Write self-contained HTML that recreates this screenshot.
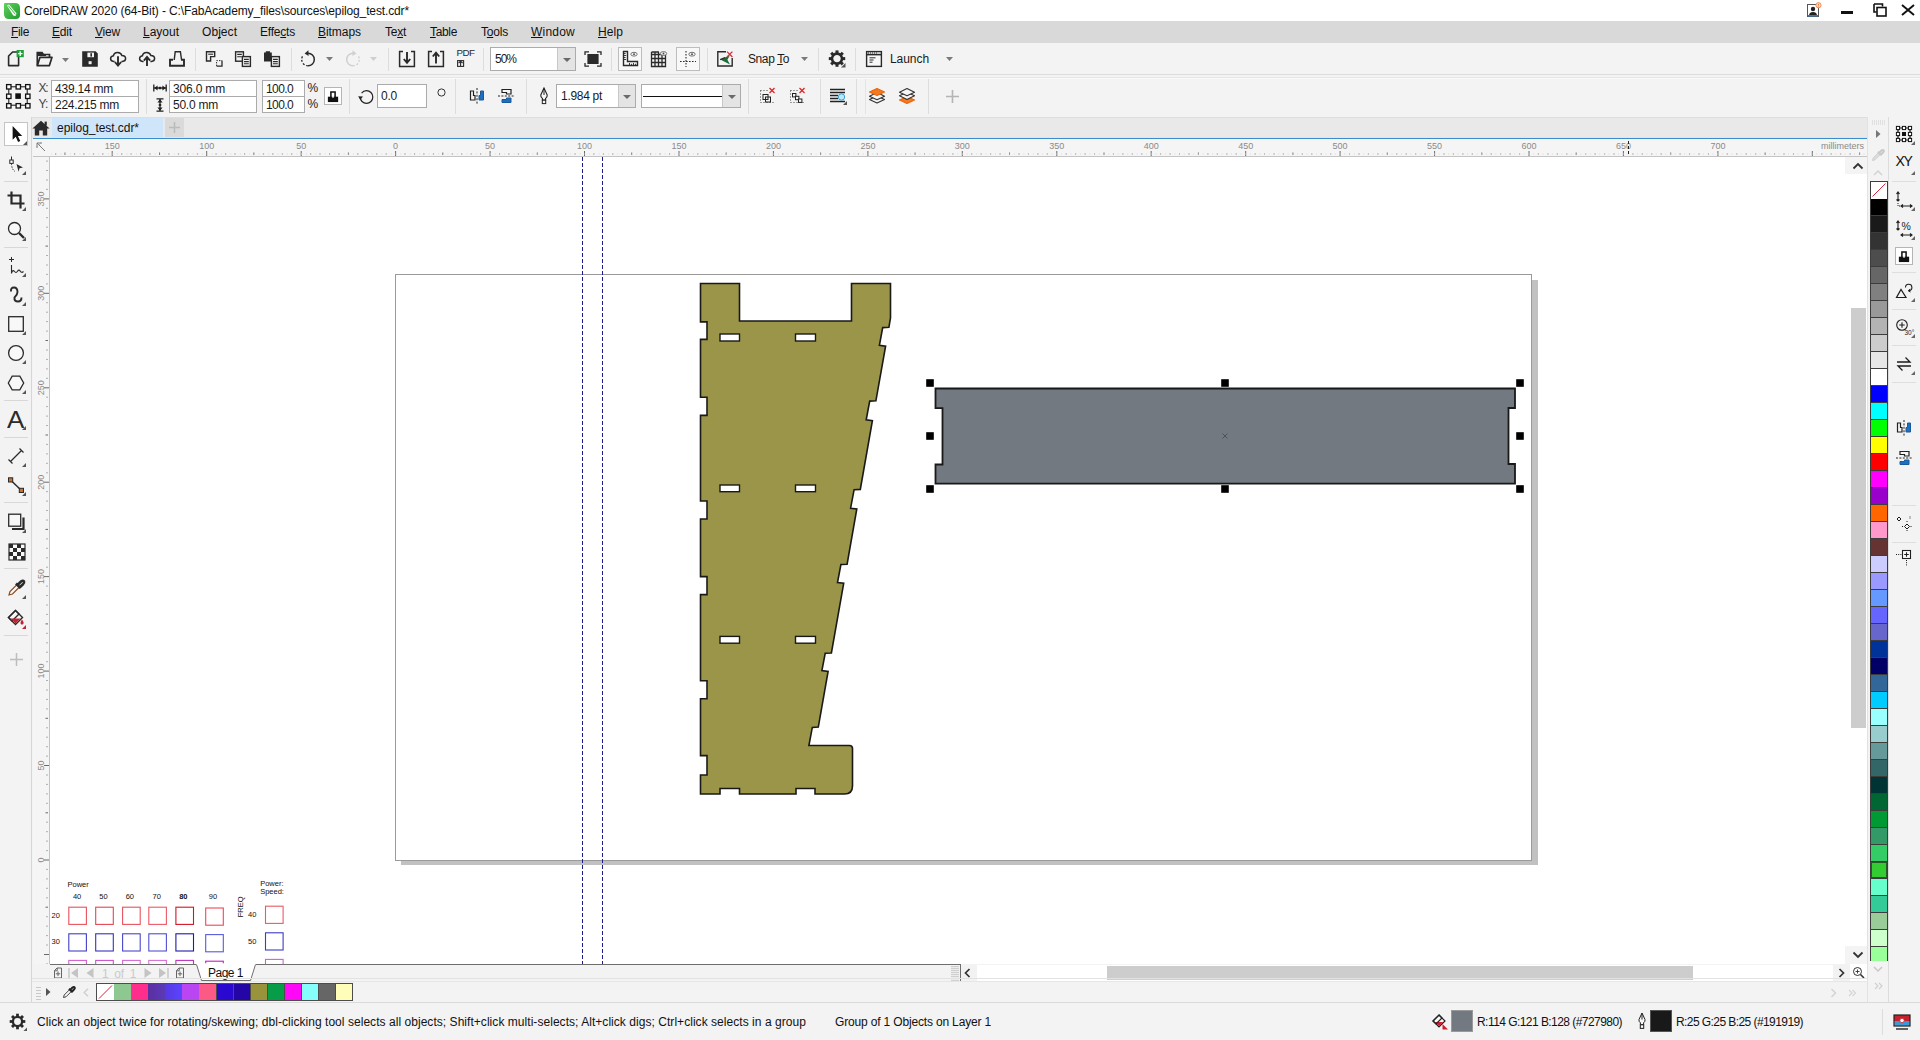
<!DOCTYPE html>
<html lang="en">
<head>
<meta charset="utf-8">
<title>CorelDRAW 2020 (64-Bit) - epilog_test.cdr</title>
<style>
*{box-sizing:border-box;margin:0;padding:0}
html,body{width:1920px;height:1040px;overflow:hidden;background:#f3f3f3}
body{font-family:"Liberation Sans",sans-serif;font-size:12px;color:#1a1a1a;position:relative}
.abs{position:absolute}
.t{position:absolute;white-space:pre;line-height:14px}
svg{position:absolute;overflow:visible}
.inp{position:absolute;background:#fff;border:1px solid #ababab}
.inp .t{left:4px;top:0px}
.vsep{position:absolute;width:1px;background:#d8d8d8}
.hsep{position:absolute;height:1px;background:#d8d8d8}
u{text-decoration-thickness:1px;text-underline-offset:1px;text-decoration-skip-ink:none}
</style>
</head>
<body>
<div class="abs" id="titlebar" style="left:0;top:0;width:1920px;height:21px;background:#fff">
<svg width="18" height="18" viewBox="0 0 18 18" style="left:3px;top:2px"><defs><linearGradient id="lg" x1="0" y1="0" x2="1" y2="1"><stop offset="0" stop-color="#5fd35a"/><stop offset="1" stop-color="#1f9a2e"/></linearGradient></defs><path d="M2 1 H12 Q17 1 17 6 V13 Q17 17 13 17 H6 Q1 17 1 12 V2 Q1 1 2 1Z" fill="url(#lg)"/><path d="M4 3.5 L6 2.6 L13.5 11.5 L12.6 14 L10.2 13.6 Z" fill="#fff"/><path d="M5.2 3.6 L12.4 12.4" stroke="#3fb548" stroke-width="1"/></svg>
<span class="t" style="left:24px;top:4px;color:#111;letter-spacing:-0.124px;">CorelDRAW 2020 (64-Bit) - C:\FabAcademy_files\sources\epilog_test.cdr*</span>
<svg width="16" height="16" viewBox="0 0 16 16" style="left:1806px;top:2px"><rect x="1.5" y="2.5" width="11" height="12" fill="#fff" stroke="#555" stroke-width="1"/><circle cx="7" cy="7" r="2.2" fill="#222"/><path d="M3 14 Q3 10 7 10 Q11 10 11 14 Z" fill="#222"/><rect x="2" y="13" width="10" height="1.5" fill="#3a78c2"/><circle cx="12.5" cy="3.2" r="2.6" fill="#fbd9c4" stroke="#f0905a" stroke-width="1"/><path d="M12.5 1.8 v1.8 M12.5 4.3 v.5" stroke="#e0601a" stroke-width=".8"/></svg>
<svg width="12" height="4" style="left:1841px;top:11px"><rect width="12" height="3" fill="#111"/></svg>
<svg width="14" height="14" viewBox="0 0 14 14" style="left:1873px;top:3px"><path d="M1 1 H9.5 V3.5 M1 1 V9 H3.5" fill="none" stroke="#111" stroke-width="1.6"/><rect x="4" y="4.5" width="9" height="8.5" fill="#fff" stroke="#111" stroke-width="1.6"/></svg>
<svg width="14" height="12" viewBox="0 0 14 12" style="left:1901px;top:4px"><path d="M1 1 L13 11 M13 1 L1 11" stroke="#111" stroke-width="1.9" fill="none"/></svg>
</div>
<div class="abs" id="menubar" style="left:0;top:21px;width:1920px;height:22px;background:#d9d9d9">
<span class="t" style="left:11px;top:4px;color:#111;letter-spacing:-0.334px;"><u>F</u>ile</span>
<span class="t" style="left:52px;top:4px;color:#111;letter-spacing:-0.170px;"><u>E</u>dit</span>
<span class="t" style="left:95px;top:4px;color:#111;letter-spacing:-0.198px;"><u>V</u>iew</span>
<span class="t" style="left:143px;top:4px;color:#111;letter-spacing:-0.005px;"><u>L</u>ayout</span>
<span class="t" style="left:202px;top:4px;color:#111;letter-spacing:0.053px;">Ob<u>j</u>ect</span>
<span class="t" style="left:260px;top:4px;color:#111;letter-spacing:-0.209px;">Effe<u>c</u>ts</span>
<span class="t" style="left:318px;top:4px;color:#111;letter-spacing:-0.050px;"><u>B</u>itmaps</span>
<span class="t" style="left:385px;top:4px;color:#111;letter-spacing:-0.252px;">Te<u>x</u>t</span>
<span class="t" style="left:430px;top:4px;color:#111;letter-spacing:-0.337px;"><u>T</u>able</span>
<span class="t" style="left:481px;top:4px;color:#111;letter-spacing:-0.202px;">T<u>o</u>ols</span>
<span class="t" style="left:531px;top:4px;color:#111;letter-spacing:0.220px;"><u>W</u>indow</span>
<span class="t" style="left:598px;top:4px;color:#111;letter-spacing:0.080px;"><u>H</u>elp</span>
</div>
<div class="abs" id="toolbar" style="left:0;top:43px;width:1920px;height:33px;background:#f3f3f3"><div class="abs" style="left:0;top:31px;width:1920px;height:1px;background:#dcdcdc"></div>
<svg width="18" height="18" viewBox="0 0 18 18" style="left:6.0px;top:7.0px"><path d="M2.6 6 L6.6 2 H12.6 V15.6 H2.6 Z" fill="none" stroke="#2a2a2a" stroke-width="1.6" stroke-linejoin="round"/><rect x="10.6" y="0" width="7.2" height="7.2" fill="#1f9e3a"/><path d="M14.2 1.3 V5.9 M11.9 3.6 H16.5" stroke="#fff" stroke-width="1.3"/></svg>
<svg width="18" height="18" viewBox="0 0 18 18" style="left:35.0px;top:7.0px"><path d="M2.3 15.5 V2.5 H7 L8.5 4.5 H14.5 V7" fill="none" stroke="#2a2a2a" stroke-width="1.7"/><path d="M2.3 15.7 L5 7.3 H17 L14.3 15.7 Z" fill="#f3f3f3" stroke="#2a2a2a" stroke-width="1.7" stroke-linejoin="round"/><path d="M2.3 2.5 H7 L8.5 4.5 H11 V6 H2.3Z" fill="#2a2a2a"/></svg>
<svg width="7" height="4" style="left:61.5px;top:14.5px"><path d="M0 0 H7 L3.5 4 Z" fill="#7a7a7a"/></svg>
<svg width="18" height="18" viewBox="0 0 18 18" style="left:81.0px;top:7.0px"><path d="M1.2 1.2 H14.6 L16.8 3.4 V16.8 H1.2 Z" fill="#2a2a2a"/><rect x="6.4" y="2.6" width="6.6" height="4.6" fill="#f3f3f3"/><rect x="9.4" y="3.2" width="1.6" height="3.4" fill="#2a2a2a"/><rect x="7.6" y="11.2" width="3" height="3" fill="#f3f3f3"/></svg>
<svg width="18" height="18" viewBox="0 0 18 18" style="left:109.0px;top:7.0px"><path d="M5.6 11.4 H4.6 Q1.6 11.4 1.6 8.6 Q1.6 6.2 4.4 5.8 Q5 2.4 8.6 2.4 Q12 2.4 12.9 5.5 Q16.6 5.6 16.6 8.6 Q16.6 11.4 13.4 11.4 H12.4" fill="none" stroke="#2a2a2a" stroke-width="1.5"/><path d="M9 6.2 V15 M5.9 12 L9 15.6 L12.1 12" fill="none" stroke="#2a2a2a" stroke-width="1.9"/></svg>
<svg width="18" height="18" viewBox="0 0 18 18" style="left:138.0px;top:7.0px"><path d="M5.6 11.4 H4.6 Q1.6 11.4 1.6 8.6 Q1.6 6.2 4.4 5.8 Q5 2.4 8.6 2.4 Q12 2.4 12.9 5.5 Q16.6 5.6 16.6 8.6 Q16.6 11.4 13.4 11.4 H12.4" fill="none" stroke="#2a2a2a" stroke-width="1.5"/><path d="M9 16 V7.4 M5.9 10.6 L9 7 L12.1 10.6" fill="none" stroke="#2a2a2a" stroke-width="1.9"/></svg>
<svg width="18" height="18" viewBox="0 0 18 18" style="left:168.0px;top:7.0px"><path d="M6.2 10 L7.2 1.8 H12.4 L13.6 10" fill="none" stroke="#2a2a2a" stroke-width="1.4"/><path d="M5 9.8 H2 V15.8 H16 V9.8 H13" fill="none" stroke="#2a2a2a" stroke-width="1.9"/></svg>
<div class="vsep" style="left:195px;top:5px;height:23px;background:#dddddd"></div>
<svg width="18" height="18" viewBox="0 0 18 18" style="left:204.0px;top:7.0px"><path d="M2.5 1.8 H10.7 V6.6 H6.6 V11 H2.5 Z" fill="none" stroke="#2a2a2a" stroke-width="1.4"/><path d="M4.2 4.2 H9.2" stroke="#2a2a2a" stroke-width="1.1"/><path d="M12.6 16 V10.6 H18" fill="none" stroke="#2a2a2a" stroke-width="1" stroke-dasharray="1.4 1.2"/><path d="M12.6 16.2 H18 V10.6" fill="none" stroke="#2a2a2a" stroke-width="1.3"/></svg>
<svg width="18" height="18" viewBox="0 0 18 18" style="left:233.0px;top:7.0px"><rect x="2.6" y="1.8" width="7.8" height="9.4" fill="#f3f3f3" stroke="#2a2a2a" stroke-width="1.4"/><path d="M4.2 4.4 H8.8 M4.2 6.8 H8.8" stroke="#2a2a2a" stroke-width="1.1"/><rect x="9.4" y="6.6" width="8" height="9.8" fill="#f3f3f3" stroke="#2a2a2a" stroke-width="1.4"/><path d="M11 9.4 H15.8 M11 11.6 H15.8 M11 13.8 H15.8" stroke="#2a2a2a" stroke-width="1.1"/></svg>
<svg width="18" height="18" viewBox="0 0 18 18" style="left:262.0px;top:7.0px"><path d="M2 2.6 H3.8 V1.2 H8 V2.6 H9.8 V11.4 H2 Z" fill="#2a2a2a"/><rect x="9.4" y="6.6" width="8" height="9.8" fill="#f3f3f3" stroke="#2a2a2a" stroke-width="1.4"/><path d="M11 9.4 H15.8 M11 11.6 H15.8 M11 13.8 H15.8" stroke="#2a2a2a" stroke-width="1.1"/></svg>
<div class="vsep" style="left:291px;top:5px;height:23px;background:#dddddd"></div>
<svg width="18" height="18" viewBox="0 0 18 18" style="left:299.0px;top:7.0px"><path d="M9 3.2 A6.3 6.3 0 1 1 3.2 7" fill="none" stroke="none" stroke-width="1.3" stroke-dasharray="7 0"/><path d="M9 3.2 A6.3 6.3 0 0 1 15.3 9.5 A6.3 6.3 0 0 1 9 15.8" fill="none" stroke="#2a2a2a" stroke-width="1.5"/><path d="M9 15.8 A6.3 6.3 0 0 1 2.7 9.5 A6.3 6.3 0 0 1 4 5.6" fill="none" stroke="#2a2a2a" stroke-width="1.3" stroke-dasharray="2 1.6"/><path d="M9.4 0.3 L5.6 3.4 L9.6 6 Z" fill="#2a2a2a"/></svg>
<svg width="7" height="4" style="left:325.5px;top:14.0px"><path d="M0 0 H7 L3.5 4 Z" fill="#7a7a7a"/></svg>
<svg width="18" height="18" viewBox="0 0 18 18" style="left:344.0px;top:7.0px"><path d="M9 3.2 A6.3 6.3 0 0 0 2.7 9.5 A6.3 6.3 0 0 0 9 15.8" fill="none" stroke="#cfcfcf" stroke-width="1.5"/><path d="M9 15.8 A6.3 6.3 0 0 0 15.3 9.5 A6.3 6.3 0 0 0 14 5.6" fill="none" stroke="#cfcfcf" stroke-width="1.3" stroke-dasharray="2 1.6"/><path d="M8.6 0.3 L12.4 3.4 L8.4 6 Z" fill="#cfcfcf"/></svg>
<svg width="7" height="4" style="left:369.5px;top:14.0px"><path d="M0 0 H7 L3.5 4 Z" fill="#cfcfcf"/></svg>
<div class="vsep" style="left:388px;top:5px;height:23px;background:#dddddd"></div>
<svg width="18" height="18" viewBox="0 0 18 18" style="left:398.0px;top:7.0px"><path d="M5 1.6 H1.6 V16.4 H16.4 V1.6 H13" fill="none" stroke="#2a2a2a" stroke-width="1.5"/><path d="M9 2 V12.5 M5.8 9 L9 12.8 L12.2 9" fill="none" stroke="#2a2a2a" stroke-width="1.9"/></svg>
<svg width="18" height="18" viewBox="0 0 18 18" style="left:427.0px;top:7.0px"><path d="M5 1.6 H1.6 V16.4 H16.4 V1.6 H13" fill="none" stroke="#2a2a2a" stroke-width="1.5"/><path d="M9 13.5 V3 M5.8 6.5 L9 2.7 L12.2 6.5" fill="none" stroke="#2a2a2a" stroke-width="1.9"/></svg>
<span class="t" style="left:456.5px;top:5px;font-size:9.8px;line-height:10px;color:#2a2a2a;letter-spacing:-0.5px">PDF</span>
<svg width="8" height="8" viewBox="0 0 8 8" style="left:457px;top:16px"><rect x=".6" y="1.6" width="6" height="5.8" fill="none" stroke="#2a2a2a" stroke-width="1.1"/><path d="M3.6 7 V2.2 M1.6 4.2 L3.6 2 L5.6 4.2" fill="none" stroke="#2a2a2a" stroke-width="1.1"/></svg>
<div class="vsep" style="left:483px;top:5px;height:23px;background:#dddddd"></div>
<div class="inp" style="left:490px;top:4px;width:86px;height:24px"><span class="t" style="left:4px;top:4px;letter-spacing:-1.006px;">50%</span><div class="abs" style="right:0;top:0;width:18px;height:22px;background:#e4e4e4;border-left:1px solid #c8c8c8"></div><svg width="8" height="4" style="left:72.0px;top:9.5px"><path d="M0 0 H8 L4.0 4 Z" fill="#6a6a6a"/></svg></div>
<svg width="18" height="18" viewBox="0 0 18 18" style="left:584.0px;top:7.0px"><rect x="3.4" y="4" width="11.2" height="10" fill="#2a2a2a"/><path d="M1 5 V1.8 H5 M13 1.8 H17 V5 M17 13 V16.2 H13 M5 16.2 H1 V13" fill="none" stroke="#2a2a2a" stroke-width="1.3"/></svg>
<div class="vsep" style="left:611px;top:5px;height:23px;background:#dddddd"></div>
<div class="abs" style="left:618px;top:4px;width:24px;height:24px;background:#f8f8f8;border:1px solid #bdbdbd"></div>
<svg width="18" height="18" viewBox="0 0 18 18" style="left:621.0px;top:7.0px"><path d="M2.5 1.5 V15.5 H16.5 V11.5 H6.5 V1.5 Z" fill="#f6f6f6" stroke="#2a2a2a" stroke-width="1.4"/><path d="M8.5 13 v2 M10.5 13.8 v1.5 M12.5 13 v2 M14.5 13.8 v1.5 M3 3.5 h1.6 M3 5.5 h2.2 M3 7.5 h1.6 M3 9.5 h2.2" stroke="#2a2a2a" stroke-width=".9"/><ellipse cx="13" cy="4.2" rx="3.2" ry="1.9" fill="#f6f6f6" stroke="#666" stroke-width=".9"/><circle cx="13" cy="4.2" r=".9" fill="#444"/></svg>
<svg width="18" height="18" viewBox="0 0 18 18" style="left:650.0px;top:7.0px"><path d="M1.5 4.5 V16.5 H15.5 V4.5 Z M1.5 8.5 H15.5 M1.5 12.5 H15.5 M5 2 V16.5 M8.5 2 V16.5 M12 4.5 V16.5 M1.5 2 V4.5 M1.5 2 H9" fill="none" stroke="#2a2a2a" stroke-width="1.3"/><ellipse cx="13.5" cy="3.5" rx="3.2" ry="1.9" fill="#f6f6f6" stroke="#666" stroke-width=".9"/><circle cx="13.5" cy="3.5" r=".9" fill="#444"/></svg>
<div class="abs" style="left:676px;top:4px;width:24px;height:24px;background:#f8f8f8;border:1px solid #bdbdbd"></div>
<svg width="18" height="18" viewBox="0 0 18 18" style="left:679.0px;top:7.0px"><path d="M7 1 V17" stroke="#2a2a2a" stroke-width="1.1" stroke-dasharray="1.6 1.4"/><path d="M1 11.5 H17" stroke="#2a2a2a" stroke-width="1.1" stroke-dasharray="1.6 1.4"/><ellipse cx="13" cy="4.2" rx="3.2" ry="1.9" fill="#f6f6f6" stroke="#666" stroke-width=".9"/><circle cx="13" cy="4.2" r=".9" fill="#444"/></svg>
<div class="vsep" style="left:707px;top:5px;height:23px;background:#dddddd"></div>
<svg width="18" height="18" viewBox="0 0 18 18" style="left:716.0px;top:7.0px"><path d="M10 1.8 H1.8 V16 H16.2 V8" fill="none" stroke="#2a2a2a" stroke-width="1.4"/><path d="M4.2 9.6 L13.8 5.4 L11.4 9.8 L14 14.6 Z" fill="#1a6e38"/><path d="M4.2 9.6 L9 7.5" stroke="#2a2a2a" stroke-width="1.2"/><path d="M11 1.6 L16.4 7 M16.4 1.6 L11 7" stroke="#e0283a" stroke-width="1.3"/></svg>
<span class="t" style="left:748px;top:9px;letter-spacing:-0.402px;">Snap <u>T</u>o</span>
<svg width="7" height="4" style="left:800.5px;top:14.0px"><path d="M0 0 H7 L3.5 4 Z" fill="#7a7a7a"/></svg>
<div class="vsep" style="left:818px;top:5px;height:23px;background:#dddddd"></div>
<svg width="18" height="18" viewBox="0 0 18 18" style="left:828.0px;top:7.0px"><g transform="translate(9 8.6)"><circle r="5" fill="none" stroke="#2a2a2a" stroke-width="2.6"/><rect x="-1.5" y="-8.2" width="3" height="3.4" fill="#2a2a2a" transform="rotate(0)"/><rect x="-1.5" y="-8.2" width="3" height="3.4" fill="#2a2a2a" transform="rotate(45)"/><rect x="-1.5" y="-8.2" width="3" height="3.4" fill="#2a2a2a" transform="rotate(90)"/><rect x="-1.5" y="-8.2" width="3" height="3.4" fill="#2a2a2a" transform="rotate(135)"/><rect x="-1.5" y="-8.2" width="3" height="3.4" fill="#2a2a2a" transform="rotate(180)"/><rect x="-1.5" y="-8.2" width="3" height="3.4" fill="#2a2a2a" transform="rotate(225)"/><rect x="-1.5" y="-8.2" width="3" height="3.4" fill="#2a2a2a" transform="rotate(270)"/><rect x="-1.5" y="-8.2" width="3" height="3.4" fill="#2a2a2a" transform="rotate(315)"/></g><path d="M17.5 13 V17.5 H13 Z" fill="#555"/></svg>
<div class="vsep" style="left:855px;top:5px;height:23px;background:#dddddd"></div>
<svg width="18" height="18" viewBox="0 0 18 18" style="left:865.0px;top:7.0px"><rect x="1.6" y="1.6" width="14.8" height="14.8" fill="#f8f8f8" stroke="#2a2a2a" stroke-width="1.4"/><path d="M1.6 4.6 H16.4" stroke="#2a2a2a" stroke-width="1.6"/><path d="M3 3 h10" stroke="#2a2a2a" stroke-width="1" stroke-dasharray="1 1"/><path d="M4.5 7.8 H10.5 M4.5 10 H8.5 M4.5 12.2 H7.5" stroke="#2a2a2a" stroke-width="1"/></svg>
<span class="t" style="left:890px;top:9px;letter-spacing:-0.061px;">Launch</span>
<svg width="7" height="4" style="left:945.5px;top:14.0px"><path d="M0 0 H7 L3.5 4 Z" fill="#7a7a7a"/></svg>
</div>
<div class="abs" id="propbar" style="left:0;top:76px;width:1920px;height:42px;background:#f3f3f3"><div class="abs" style="left:0;top:1px;width:1920px;height:1px;background:#e6e6e6"></div><div class="abs" style="left:0;top:2px;width:1920px;height:1px;background:#fafafa"></div><div class="abs" style="left:0;top:41px;width:1920px;height:1px;background:#dedede"></div>
<svg width="24" height="24" viewBox="0 0 24 24" style="left:6.0px;top:8.0px"><path d="M2.8 2.8 H21.2 V21.2 H2.8 Z" fill="none" stroke="#111" stroke-width="1"/><rect x="0.6" y="0.6" width="4.4" height="4.4" fill="#fff" stroke="#111" stroke-width="1.3"/><rect x="10.1" y="0.6" width="4.4" height="4.4" fill="#fff" stroke="#111" stroke-width="1.3"/><rect x="19.6" y="0.6" width="4.4" height="4.4" fill="#fff" stroke="#111" stroke-width="1.3"/><rect x="0.6" y="10.1" width="4.4" height="4.4" fill="#fff" stroke="#111" stroke-width="1.3"/><rect x="19.6" y="10.1" width="4.4" height="4.4" fill="#fff" stroke="#111" stroke-width="1.3"/><rect x="0.6" y="19.6" width="4.4" height="4.4" fill="#fff" stroke="#111" stroke-width="1.3"/><rect x="10.1" y="19.6" width="4.4" height="4.4" fill="#fff" stroke="#111" stroke-width="1.3"/><rect x="19.6" y="19.6" width="4.4" height="4.4" fill="#fff" stroke="#111" stroke-width="1.3"/><rect x="9.3" y="9.3" width="5.6" height="5.6" fill="#111"/></svg>
<span class="t" style="left:38.5px;top:5px;color:#444;letter-spacing:-1.170px;">X:</span>
<span class="t" style="left:38.5px;top:21px;color:#444;letter-spacing:-0.838px;">Y:</span>
<div class="inp" style="left:51px;top:4px;width:88px;height:17px"><span class="t" style="left:3px;top:0.5px;letter-spacing:-0.226px;">439.14 mm</span></div>
<div class="inp" style="left:51px;top:20px;width:88px;height:17px"><span class="t" style="left:3px;top:0.5px;letter-spacing:-0.270px;">224.215 mm</span></div>
<div class="vsep" style="left:146px;top:3px;height:35px;background:#dddddd"></div>
<svg width="14" height="8" viewBox="0 0 14 8" style="left:153px;top:8px"><path d="M.8 .5 V7.5 M13.2 .5 V7.5 M1.5 4 H12.5" stroke="#222" stroke-width="1.3" fill="none"/><path d="M1.2 4 L4.6 1.4 V6.6 Z M12.8 4 L9.4 1.4 V6.6 Z" fill="#222"/><path d="M6 4 h2" stroke="#222" stroke-width="2.4"/></svg>
<svg width="8" height="14" viewBox="0 0 8 14" style="left:156px;top:22px"><path d="M.5 .8 H7.5 M.5 13.2 H7.5 M4 1.5 V12.5" stroke="#222" stroke-width="1.3" fill="none"/><path d="M4 1.2 L1.4 4.6 H6.6 Z M4 12.8 L1.4 9.4 H6.6 Z" fill="#222"/><path d="M4 6 v2" stroke="#222" stroke-width="2.4"/></svg>
<div class="inp" style="left:169px;top:4px;width:88px;height:17px"><span class="t" style="left:3px;top:0.5px;letter-spacing:-0.170px;">306.0 mm</span></div>
<div class="inp" style="left:169px;top:20px;width:88px;height:17px"><span class="t" style="left:3px;top:0.5px;letter-spacing:-0.240px;">50.0 mm</span></div>
<div class="inp" style="left:262px;top:4px;width:43px;height:17px"><span class="t" style="left:3px;top:0.5px;letter-spacing:-0.606px;">100.0</span></div>
<div class="inp" style="left:262px;top:20px;width:43px;height:17px"><span class="t" style="left:3px;top:0.5px;letter-spacing:-0.606px;">100.0</span></div>
<span class="t" style="left:307.5px;top:5px;color:#222;letter-spacing:-1.170px;">%</span>
<span class="t" style="left:307.5px;top:21px;color:#222;letter-spacing:-1.170px;">%</span>
<div class="abs" style="left:324px;top:11px;width:18px;height:18px;background:#fff;border:1px solid #b5b5b5"></div>
<svg width="14" height="14" viewBox="0 0 12 12" style="left:326.0px;top:13.0px"><path d="M4.2 7 V2.6 H7.8 V7" fill="none" stroke="#111" stroke-width="1.3"/><rect x="1.6" y="6.6" width="8.8" height="4.6" fill="#111"/><path d="M5.4 6.8 h1.2" stroke="#fff" stroke-width="1.6"/></svg>
<div class="vsep" style="left:349px;top:3px;height:35px;background:#dddddd"></div>
<svg width="16" height="16" viewBox="0 0 16 16" style="left:358.0px;top:12.5px"><path d="M2.2 8 A6.3 6.3 0 1 0 8.5 1.7 A6.3 6.3 0 0 0 3.6 4.1" fill="none" stroke="#222" stroke-width="1.2"/><path d="M.2 7.2 L5 7.6 L2.2 11 Z" fill="#222"/></svg>
<div class="inp" style="left:377px;top:8px;width:50px;height:24px"><span class="t" style="left:3px;top:4px;letter-spacing:-0.227px;">0.0</span></div>
<svg width="9" height="9" style="left:436.5px;top:12px"><circle cx="4.5" cy="4.5" r="3.6" fill="none" stroke="#333" stroke-width="1"/></svg>
<div class="vsep" style="left:455px;top:3px;height:35px;background:#dddddd"></div>
<svg width="18" height="18" viewBox="0 0 18 18" style="left:468.0px;top:11.0px"><path d="M2.5 4 H5.5 V8.5 H7 V13 H2.5 Z" fill="#f6f6f6" stroke="#222" stroke-width="1.2"/><path d="M15.5 4 H12.5 V8.5 H11 V13 H15.5 Z" fill="#1f6fbf" stroke="#1a5a9c" stroke-width="1"/><path d="M9 1 V17" stroke="#222" stroke-width="1" stroke-dasharray="2 1.4"/></svg>
<svg width="18" height="18" viewBox="0 0 18 18" style="left:497.0px;top:11.0px"><path d="M5 2.5 V5.5 H9.5 V7 H14 V2.5 Z" fill="#f6f6f6" stroke="#222" stroke-width="1.2"/><path d="M5 15.5 V12.5 H9.5 V11 H14 V15.5 Z" fill="#1f6fbf" stroke="#1a5a9c" stroke-width="1"/><path d="M1 9 H17" stroke="#222" stroke-width="1" stroke-dasharray="2 1.4"/></svg>
<div class="vsep" style="left:526px;top:3px;height:35px;background:#dddddd"></div>
<svg width="18" height="18" viewBox="-3 0 18 18" style="left:535.0px;top:11.0px"><path d="M5 1 L1.8 8 Q1.5 10 3.4 11.4 V13 H6.6 V11.4 Q8.5 10 8.2 8 Z" fill="#f6f6f6" stroke="#222" stroke-width="1.1" transform="translate(1 0)"/><path d="M6 1.5 V8" stroke="#222" stroke-width="1"/><rect x="4.3" y="13.2" width="3.4" height="3.4" fill="#f6f6f6" stroke="#222" stroke-width="1"/></svg>
<div class="inp" style="left:556px;top:8px;width:80px;height:24px"><span class="t" style="left:4px;top:4px;letter-spacing:-0.296px;">1.984 pt</span><div class="abs" style="right:0;top:0;width:17px;height:22px;background:#e4e4e4;border-left:1px solid #c8c8c8"></div><svg width="8" height="4" style="left:66.0px;top:9.5px"><path d="M0 0 H8 L4.0 4 Z" fill="#6a6a6a"/></svg></div>
<div class="inp" style="left:641px;top:8px;width:100px;height:24px"><div class="abs" style="left:1px;top:10.5px;width:79px;height:1.4px;background:#111"></div><div class="abs" style="right:0;top:0;width:18px;height:22px;background:#e4e4e4;border-left:1px solid #c8c8c8"></div><svg width="8" height="4" style="left:86.0px;top:9.5px"><path d="M0 0 H8 L4.0 4 Z" fill="#6a6a6a"/></svg></div>
<div class="vsep" style="left:748px;top:3px;height:35px;background:#dddddd"></div>
<svg width="18" height="18" viewBox="0 0 18 18" style="left:759.0px;top:11.0px"><path d="M1.5 3.5 V15.5 H16" fill="none" stroke="#444" stroke-width="1" stroke-dasharray="1 2"/><path d="M1.5 3.5 H9" fill="none" stroke="#444" stroke-width="1" stroke-dasharray="1 2"/><rect x="4" y="7.5" width="5" height="5" fill="#f6f6f6" stroke="#222" stroke-width="1"/><rect x="6.5" y="10" width="5" height="5" fill="none" stroke="#222" stroke-width="1"/><path d="M10.5 1 L15.5 6 M15.5 1 L10.5 6" stroke="#e02020" stroke-width="1.2"/></svg>
<svg width="18" height="18" viewBox="0 0 18 18" style="left:789.0px;top:11.0px"><path d="M1.5 3.5 V15.5 H16" fill="none" stroke="#444" stroke-width="1" stroke-dasharray="1 2"/><path d="M1.5 3.5 H9" fill="none" stroke="#444" stroke-width="1" stroke-dasharray="1 2"/><rect x="3.5" y="6.5" width="3.4" height="3.4" fill="#f6f6f6" stroke="#222" stroke-width="1"/><rect x="6.5" y="9.3" width="3.4" height="3.4" fill="#f6f6f6" stroke="#222" stroke-width="1"/><rect x="9.5" y="12" width="3.4" height="3.4" fill="#f6f6f6" stroke="#222" stroke-width="1"/><path d="M10.5 1 L15.5 6 M15.5 1 L10.5 6" stroke="#e02020" stroke-width="1.2"/></svg>
<div class="vsep" style="left:820px;top:3px;height:35px;background:#dddddd"></div>
<svg width="18" height="18" viewBox="0 0 18 18" style="left:829.0px;top:11.0px"><path d="M1 2.5 H16 M1 5.5 H16 M1 8.5 H9 M1 11.5 H9 M1 14.5 H16" stroke="#222" stroke-width="1.3"/><circle cx="12.5" cy="10" r="3.2" fill="#bfe6f7" stroke="#3a9fd0" stroke-width="1"/><path d="M18 14 V18 H14 Z" fill="#555"/></svg>
<div class="vsep" style="left:856px;top:3px;height:35px;background:#dddddd"></div>
<svg width="18" height="18" viewBox="0 0 18 18" style="left:868.0px;top:11.0px"><path d="M9 8.9 L16.5 12.5 L9 16.1 L1.5 12.5 Z" fill="#f6f6f6" stroke="#333" stroke-width="1.1" stroke-linejoin="round"/><path d="M9 5.6 L16.5 9.2 L9 12.8 L1.5 9.2 Z" fill="#f6f6f6" stroke="#333" stroke-width="1.1" stroke-linejoin="round"/><path d="M9 1.4 L16.5 5.0 L9 8.6 L1.5 5.0 Z" fill="#f57a1f" stroke="#e8650c" stroke-width="1.1" stroke-linejoin="round"/></svg>
<svg width="18" height="18" viewBox="0 0 18 18" style="left:898.0px;top:11.0px"><path d="M9 9.4 L16.5 13.0 L9 16.6 L1.5 13.0 Z" fill="#f57a1f" stroke="#e8650c" stroke-width="1.1" stroke-linejoin="round"/><path d="M9 5.2 L16.5 8.8 L9 12.4 L1.5 8.8 Z" fill="#f6f6f6" stroke="#333" stroke-width="1.1" stroke-linejoin="round"/><path d="M9 1.6 L16.5 5.2 L9 8.8 L1.5 5.2 Z" fill="#f6f6f6" stroke="#333" stroke-width="1.1" stroke-linejoin="round"/></svg>
<div class="vsep" style="left:865px;top:3px;height:35px;background:#e4e4e4"></div>
<div class="vsep" style="left:928px;top:3px;height:35px;background:#dddddd"></div>
<svg width="13" height="13" style="left:945.5px;top:13.5px"><path d="M6.5 0 V13 M0 6.5 H13" stroke="#b4b4b4" stroke-width="1.6"/></svg>
</div>
<div class="abs" id="tabrow" style="left:0;top:118px;width:1920px;height:21px;background:#e9e9e9">
<div class="abs" style="left:33px;top:19px;width:1834px;height:3px;background:#d4eafb"></div><div class="abs" style="left:33px;top:20px;width:1834px;height:1px;background:#3b8ccb"></div>
<div class="abs" style="left:52px;top:0px;width:111px;height:19px;background:#cfe5fa"></div>
<div class="abs" style="left:165px;top:0px;width:19px;height:19px;background:#dadada"></div>
<svg width="11" height="11" style="left:169px;top:4px"><path d="M5.5 0 V11 M0 5.5 H11" stroke="#bcbcbc" stroke-width="1.6"/></svg>
<svg width="18" height="16" viewBox="0 0 18 16" style="left:32px;top:2px"><path d="M9 .8 L17.6 8.4 H15.2 V15.5 H10.8 V10.5 H7.2 V15.5 H2.8 V8.4 H.4 Z" fill="#2a2a2a"/><rect x="12.6" y="1.6" width="2.2" height="4" fill="#2a2a2a"/></svg>
<span class="t" style="left:57px;top:2.5px;color:#111;letter-spacing:-0.045px;">epilog_test.cdr*</span>
</div>
<div class="abs" id="toolbox" style="left:0;top:117px;width:32px;height:886px;background:#f3f3f3;border-right:1px solid #d6d6d6">
<div class="abs" style="left:4px;top:5px;width:24px;height:24px;background:#fff;border:1px solid #c4c4c4"></div>
<svg width="19.5" height="19.5" viewBox="0 0 20 20" style="left:6.25px;top:6.75px"><path d="M6.8 2 V16.2 L10 13.2 L12.4 18.4 L14.6 17.4 L12.2 12.4 H16.6 Z" fill="#111"/></svg><svg width="4" height="4" style="left:23px;top:24px"><path d="M4 0 V4 H0 Z" fill="#555"/></svg>
<svg width="20" height="20" viewBox="0 0 20 20" style="left:6.0px;top:37.0px"><path d="M5.5 2.5 V6" stroke="#2a2a2a" stroke-width="1"/><rect x="3.8" y="6" width="3.4" height="3.4" fill="#f6f6f6" stroke="#2a2a2a" stroke-width="1"/><path d="M5.5 9.5 Q5.5 15 9 17.5" fill="none" stroke="#2a2a2a" stroke-width="1" stroke-dasharray="1.5 1.2"/><path d="M10.5 10 L17 13.5 L13.5 14.3 L12.6 17.8 Z" fill="#2a2a2a"/></svg><svg width="4" height="4" style="left:22px;top:53.5px"><path d="M4 0 V4 H0 Z" fill="#555"/></svg>
<div class="hsep" style="left:4px;top:64px;width:24px"></div>
<svg width="20" height="20" viewBox="0 0 20 20" style="left:6.0px;top:73.0px"><path d="M5.5 1.5 V13.5 H18.5 M1.5 5.5 H14.5 V18.5" fill="none" stroke="#2a2a2a" stroke-width="2.2"/><path d="M5.5 8.5 H11.5 V13.5" fill="none" stroke="#f3f3f3" stroke-width="0"/></svg><svg width="4" height="4" style="left:22px;top:89.5px"><path d="M4 0 V4 H0 Z" fill="#555"/></svg>
<svg width="20" height="20" viewBox="0 0 20 20" style="left:6.0px;top:103.0px"><circle cx="8.5" cy="8.5" r="6" fill="#f8f8f8" stroke="#2a2a2a" stroke-width="1.3"/><path d="M13 13 L18 18" stroke="#2a2a2a" stroke-width="2.4"/></svg><svg width="4" height="4" style="left:22px;top:119.5px"><path d="M4 0 V4 H0 Z" fill="#555"/></svg>
<div class="hsep" style="left:4px;top:130px;width:24px"></div>
<svg width="20" height="20" viewBox="0 0 20 20" style="left:6.0px;top:139.0px"><path d="M3 3.5 H8 M5.5 1 V6" stroke="#2a2a2a" stroke-width="1"/><path d="M5.5 9 V17.5 Q6.5 13 8.5 15.5 Q10 17.5 11.5 15.2 Q13 13 14.3 15.2 Q15.6 17.3 17.5 15.5" fill="none" stroke="#2a2a2a" stroke-width="1.1"/></svg><svg width="4" height="4" style="left:22px;top:155.5px"><path d="M4 0 V4 H0 Z" fill="#555"/></svg>
<svg width="20" height="20" viewBox="0 0 20 20" style="left:6.0px;top:168.0px"><path d="M5 6.5 Q4.5 2.5 8 2.5 Q11.5 2.5 11.5 7 Q11.5 10 8.5 12.5 Q8 16.5 12 16.5 Q15.5 16.5 15.5 12.5" fill="none" stroke="#2a2a2a" stroke-width="1.9"/></svg><svg width="4" height="4" style="left:22px;top:184.5px"><path d="M4 0 V4 H0 Z" fill="#555"/></svg>
<svg width="20" height="20" viewBox="0 0 20 20" style="left:6.0px;top:197.0px"><rect x="2.7" y="2.7" width="14.6" height="14.6" fill="#f8f8f8" stroke="#2a2a2a" stroke-width="1.3"/></svg><svg width="4" height="4" style="left:22px;top:213.5px"><path d="M4 0 V4 H0 Z" fill="#555"/></svg>
<svg width="20" height="20" viewBox="0 0 20 20" style="left:6.0px;top:226.0px"><circle cx="10" cy="10" r="7.4" fill="#f8f8f8" stroke="#2a2a2a" stroke-width="1.3"/></svg><svg width="4" height="4" style="left:22px;top:242.5px"><path d="M4 0 V4 H0 Z" fill="#555"/></svg>
<svg width="20" height="20" viewBox="0 0 20 20" style="left:6.0px;top:256.0px"><path d="M2.3 10 L6.2 3.2 H13.8 L17.7 10 L13.8 16.8 H6.2 Z" fill="#f8f8f8" stroke="#2a2a2a" stroke-width="1.3"/></svg><svg width="4" height="4" style="left:22px;top:272.5px"><path d="M4 0 V4 H0 Z" fill="#555"/></svg>
<div class="hsep" style="left:4px;top:283px;width:24px"></div>
<span class="t" style="left:7px;top:291px;font-size:24px;line-height:24px;color:#2a2a2a;transform:scaleX(1.08);transform-origin:left">A</span><svg width="4" height="4" style="left:22px;top:308.5px"><path d="M4 0 V4 H0 Z" fill="#555"/></svg>
<div class="hsep" style="left:4px;top:320px;width:24px"></div>
<svg width="20" height="20" viewBox="0 0 20 20" style="left:6.0px;top:329.0px"><path d="M4.5 15.5 L15.5 4.5" stroke="#2a2a2a" stroke-width="1.2"/><path d="M2.5 13.5 L6.5 17.5 M13.5 2.5 L17.5 6.5" stroke="#2a2a2a" stroke-width="1.2"/></svg><svg width="4" height="4" style="left:22px;top:345.5px"><path d="M4 0 V4 H0 Z" fill="#555"/></svg>
<svg width="20" height="20" viewBox="0 0 20 20" style="left:6.0px;top:358.0px"><path d="M4.5 5 L15.5 15.5" stroke="#2a2a2a" stroke-width="1.5"/><rect x="2.5" y="2.8" width="4.2" height="4.2" fill="#c9712a" stroke="#2a2a2a" stroke-width="1"/><rect x="13.3" y="13.3" width="4.2" height="4.2" fill="#c9712a" stroke="#2a2a2a" stroke-width="1"/></svg><svg width="4" height="4" style="left:22px;top:374.5px"><path d="M4 0 V4 H0 Z" fill="#555"/></svg>
<div class="hsep" style="left:4px;top:385px;width:24px"></div>
<svg width="20" height="20" viewBox="0 0 20 20" style="left:6.0px;top:395.0px"><path d="M6 17 H17.5 V5.5" fill="none" stroke="#2a2a2a" stroke-width="2.2"/><rect x="2.7" y="2.2" width="12" height="12" fill="#f8f8f8" stroke="#2a2a2a" stroke-width="1.3"/></svg><svg width="4" height="4" style="left:22px;top:411.5px"><path d="M4 0 V4 H0 Z" fill="#555"/></svg>
<svg width="18" height="18" viewBox="0 0 18 18" style="left:7.0px;top:425.0px"><rect x="2" y="2" width="16" height="16" fill="#f8f8f8" stroke="#2a2a2a" stroke-width="1.2"/><rect x="2" y="2" width="4" height="4" fill="#2a2a2a"/><rect x="10" y="2" width="4" height="4" fill="#2a2a2a"/><rect x="6" y="6" width="4" height="4" fill="#2a2a2a"/><rect x="14" y="6" width="4" height="4" fill="#2a2a2a"/><rect x="2" y="10" width="4" height="4" fill="#2a2a2a"/><rect x="10" y="10" width="4" height="4" fill="#2a2a2a"/><rect x="6" y="14" width="4" height="4" fill="#2a2a2a"/><rect x="14" y="14" width="4" height="4" fill="#2a2a2a"/></svg>
<div class="hsep" style="left:4px;top:451px;width:24px"></div>
<svg width="20" height="20" viewBox="0 0 20 20" style="left:6.0px;top:461.0px"><path d="M3 17 L4 13.5 L11 6.5 L13.5 9 L6.5 16 Z" fill="#f8f8f8" stroke="#8a4a1f" stroke-width="1.2"/><path d="M10 5.5 L14.5 10 M11.5 7 L15 3.5 Q17 2 18 3.5 Q18.5 5 17 6.2 L13.5 9.5" stroke="#2a2a2a" stroke-width="2.6" fill="none"/></svg><svg width="4" height="4" style="left:22px;top:477.5px"><path d="M4 0 V4 H0 Z" fill="#555"/></svg>
<svg width="20" height="20" viewBox="0 0 20 20" style="left:6.0px;top:491.0px"><path d="M9.5 2.5 L16.5 9.5 L9.5 16.5 L2.5 9.5 Z" fill="#f8f8f8" stroke="#2a2a2a" stroke-width="1.4"/><path d="M9.5 2.5 L13 6 L6 13 L2.5 9.5Z" fill="none" stroke="#2a2a2a" stroke-width="1.4"/><path d="M4.5 10.5 H14.5 L9.5 15.5 Z" fill="#c8202c"/><path d="M16 11.5 Q18.5 14.5 17.2 16 Q16 17.2 14.8 16 Q13.8 14.5 16 11.5Z" fill="#c8202c"/></svg><svg width="4" height="4" style="left:22px;top:507.5px"><path d="M4 0 V4 H0 Z" fill="#c8202c"/></svg>
<div class="hsep" style="left:4px;top:518px;width:24px"></div>
<svg width="13" height="13" style="left:9.5px;top:535.5px"><path d="M6.5 0 V13 M0 6.5 H13" stroke="#bdbdbd" stroke-width="1.5"/></svg>
</div>
<div class="abs" id="hruler" style="left:33px;top:139px;width:1834px;height:18px;background:#f5f5f5;border-bottom:1px solid #c4c4c4;overflow:hidden">
<svg width="1834" height="18" viewBox="33 139 1834 18" style="left:0;top:0">
<path d="M55.6 153.5 V154.5 M65.0 152.5 V155 M74.5 153.5 V154.5 M83.9 153.5 V154.5 M93.4 153.5 V154.5 M102.8 153.5 V154.5 M112.2 151 V156.5 M121.7 153.5 V154.5 M131.1 153.5 V154.5 M140.6 153.5 V154.5 M150.0 153.5 V154.5 M159.5 152.5 V155 M168.9 153.5 V154.5 M178.4 153.5 V154.5 M187.8 153.5 V154.5 M197.3 153.5 V154.5 M206.7 151 V156.5 M216.1 153.5 V154.5 M225.6 153.5 V154.5 M235.0 153.5 V154.5 M244.5 153.5 V154.5 M253.9 152.5 V155 M263.4 153.5 V154.5 M272.8 153.5 V154.5 M282.3 153.5 V154.5 M291.7 153.5 V154.5 M301.2 151 V156.5 M310.6 153.5 V154.5 M320.0 153.5 V154.5 M329.5 153.5 V154.5 M338.9 153.5 V154.5 M348.4 152.5 V155 M357.8 153.5 V154.5 M367.3 153.5 V154.5 M376.7 153.5 V154.5 M386.2 153.5 V154.5 M395.6 151 V156.5 M405.0 153.5 V154.5 M414.5 153.5 V154.5 M423.9 153.5 V154.5 M433.4 153.5 V154.5 M442.8 152.5 V155 M452.3 153.5 V154.5 M461.7 153.5 V154.5 M471.2 153.5 V154.5 M480.6 153.5 V154.5 M490.1 151 V156.5 M499.5 153.5 V154.5 M508.9 153.5 V154.5 M518.4 153.5 V154.5 M527.8 153.5 V154.5 M537.3 152.5 V155 M546.7 153.5 V154.5 M556.2 153.5 V154.5 M565.6 153.5 V154.5 M575.1 153.5 V154.5 M584.5 151 V156.5 M593.9 153.5 V154.5 M603.4 153.5 V154.5 M612.8 153.5 V154.5 M622.3 153.5 V154.5 M631.7 152.5 V155 M641.2 153.5 V154.5 M650.6 153.5 V154.5 M660.1 153.5 V154.5 M669.5 153.5 V154.5 M679.0 151 V156.5 M688.4 153.5 V154.5 M697.8 153.5 V154.5 M707.3 153.5 V154.5 M716.7 153.5 V154.5 M726.2 152.5 V155 M735.6 153.5 V154.5 M745.1 153.5 V154.5 M754.5 153.5 V154.5 M764.0 153.5 V154.5 M773.4 151 V156.5 M782.8 153.5 V154.5 M792.3 153.5 V154.5 M801.7 153.5 V154.5 M811.2 153.5 V154.5 M820.6 152.5 V155 M830.1 153.5 V154.5 M839.5 153.5 V154.5 M849.0 153.5 V154.5 M858.4 153.5 V154.5 M867.9 151 V156.5 M877.3 153.5 V154.5 M886.7 153.5 V154.5 M896.2 153.5 V154.5 M905.6 153.5 V154.5 M915.1 152.5 V155 M924.5 153.5 V154.5 M934.0 153.5 V154.5 M943.4 153.5 V154.5 M952.9 153.5 V154.5 M962.3 151 V156.5 M971.7 153.5 V154.5 M981.2 153.5 V154.5 M990.6 153.5 V154.5 M1000.1 153.5 V154.5 M1009.5 152.5 V155 M1019.0 153.5 V154.5 M1028.4 153.5 V154.5 M1037.9 153.5 V154.5 M1047.3 153.5 V154.5 M1056.8 151 V156.5 M1066.2 153.5 V154.5 M1075.6 153.5 V154.5 M1085.1 153.5 V154.5 M1094.5 153.5 V154.5 M1104.0 152.5 V155 M1113.4 153.5 V154.5 M1122.9 153.5 V154.5 M1132.3 153.5 V154.5 M1141.8 153.5 V154.5 M1151.2 151 V156.5 M1160.6 153.5 V154.5 M1170.1 153.5 V154.5 M1179.5 153.5 V154.5 M1189.0 153.5 V154.5 M1198.4 152.5 V155 M1207.9 153.5 V154.5 M1217.3 153.5 V154.5 M1226.8 153.5 V154.5 M1236.2 153.5 V154.5 M1245.7 151 V156.5 M1255.1 153.5 V154.5 M1264.5 153.5 V154.5 M1274.0 153.5 V154.5 M1283.4 153.5 V154.5 M1292.9 152.5 V155 M1302.3 153.5 V154.5 M1311.8 153.5 V154.5 M1321.2 153.5 V154.5 M1330.7 153.5 V154.5 M1340.1 151 V156.5 M1349.5 153.5 V154.5 M1359.0 153.5 V154.5 M1368.4 153.5 V154.5 M1377.9 153.5 V154.5 M1387.3 152.5 V155 M1396.8 153.5 V154.5 M1406.2 153.5 V154.5 M1415.7 153.5 V154.5 M1425.1 153.5 V154.5 M1434.6 151 V156.5 M1444.0 153.5 V154.5 M1453.4 153.5 V154.5 M1462.9 153.5 V154.5 M1472.3 153.5 V154.5 M1481.8 152.5 V155 M1491.2 153.5 V154.5 M1500.7 153.5 V154.5 M1510.1 153.5 V154.5 M1519.6 153.5 V154.5 M1529.0 151 V156.5 M1538.4 153.5 V154.5 M1547.9 153.5 V154.5 M1557.3 153.5 V154.5 M1566.8 153.5 V154.5 M1576.2 152.5 V155 M1585.7 153.5 V154.5 M1595.1 153.5 V154.5 M1604.6 153.5 V154.5 M1614.0 153.5 V154.5 M1623.4 151 V156.5 M1632.9 153.5 V154.5 M1642.3 153.5 V154.5 M1651.8 153.5 V154.5 M1661.2 153.5 V154.5 M1670.7 152.5 V155 M1680.1 153.5 V154.5 M1689.6 153.5 V154.5 M1699.0 153.5 V154.5 M1708.5 153.5 V154.5 M1717.9 151 V156.5 M1727.3 153.5 V154.5 M1736.8 153.5 V154.5 M1746.2 153.5 V154.5 M1755.7 153.5 V154.5 M1765.1 152.5 V155 M1774.6 153.5 V154.5 M1784.0 153.5 V154.5 M1793.5 153.5 V154.5 M1802.9 153.5 V154.5 M1812.3 151 V156.5 M1821.8 153.5 V154.5 M1831.2 153.5 V154.5 M1840.7 153.5 V154.5 M1850.1 153.5 V154.5 M1859.6 152.5 V155" stroke="#6a6a6a" stroke-width="1" fill="none"/>
<path d="M51 154 H1866" stroke="#d8d8d8" stroke-width="1" fill="none" stroke-dasharray="1 3.72"/>
<g font-family="Liberation Sans, sans-serif" font-size="9" fill="#8a8a8a" text-anchor="middle">
<text x="112.2" y="149">150</text>
<text x="206.7" y="149">100</text>
<text x="301.2" y="149">50</text>
<text x="395.6" y="149">0</text>
<text x="490.1" y="149">50</text>
<text x="584.5" y="149">100</text>
<text x="679.0" y="149">150</text>
<text x="773.4" y="149">200</text>
<text x="867.9" y="149">250</text>
<text x="962.3" y="149">300</text>
<text x="1056.8" y="149">350</text>
<text x="1151.2" y="149">400</text>
<text x="1245.7" y="149">450</text>
<text x="1340.1" y="149">500</text>
<text x="1434.6" y="149">550</text>
<text x="1529.0" y="149">600</text>
<text x="1623.4" y="149">650</text>
<text x="1717.9" y="149">700</text>
</g>
<text x="1864" y="149" font-family="Liberation Sans, sans-serif" font-size="9" fill="#8a8a8a" text-anchor="end">millimeters</text>
<path d="M1628.5 141 V156" stroke="#222" stroke-width="1" stroke-dasharray="3 2" fill="none"/>
<path d="M37 143 L45 151 M37 143 H42 M37 143 V148" stroke="#7a7a7a" stroke-width="1" fill="none"/><path d="M36.5 146.5 h1 M38.5 144.5 h1 M40 143 h1" stroke="#9a9a9a" stroke-width="1" stroke-dasharray="1 1"/>
</svg></div>
<div class="abs" id="vruler" style="left:33px;top:157px;width:17px;height:807px;background:#f5f5f5;border-right:1px solid #c4c4c4;overflow:hidden">
<svg width="17" height="807" viewBox="33 157 17 807" style="left:0;top:0">
<path d="M46.5 963.9 H47.5 M44 954.5 H49.5 M46.5 945.0 H47.5 M46.5 935.6 H47.5 M46.5 926.1 H47.5 M46.5 916.7 H47.5 M45.5 907.2 H48 M46.5 897.8 H47.5 M46.5 888.3 H47.5 M46.5 878.9 H47.5 M46.5 869.4 H47.5 M44 860.0 H49.5 M46.5 850.6 H47.5 M46.5 841.1 H47.5 M46.5 831.7 H47.5 M46.5 822.2 H47.5 M45.5 812.8 H48 M46.5 803.3 H47.5 M46.5 793.9 H47.5 M46.5 784.4 H47.5 M46.5 775.0 H47.5 M44 765.5 H49.5 M46.5 756.1 H47.5 M46.5 746.7 H47.5 M46.5 737.2 H47.5 M46.5 727.8 H47.5 M45.5 718.3 H48 M46.5 708.9 H47.5 M46.5 699.4 H47.5 M46.5 690.0 H47.5 M46.5 680.5 H47.5 M44 671.1 H49.5 M46.5 661.7 H47.5 M46.5 652.2 H47.5 M46.5 642.8 H47.5 M46.5 633.3 H47.5 M45.5 623.9 H48 M46.5 614.4 H47.5 M46.5 605.0 H47.5 M46.5 595.5 H47.5 M46.5 586.1 H47.5 M44 576.6 H49.5 M46.5 567.2 H47.5 M46.5 557.8 H47.5 M46.5 548.3 H47.5 M46.5 538.9 H47.5 M45.5 529.4 H48 M46.5 520.0 H47.5 M46.5 510.5 H47.5 M46.5 501.1 H47.5 M46.5 491.6 H47.5 M44 482.2 H49.5 M46.5 472.8 H47.5 M46.5 463.3 H47.5 M46.5 453.9 H47.5 M46.5 444.4 H47.5 M45.5 435.0 H48 M46.5 425.5 H47.5 M46.5 416.1 H47.5 M46.5 406.6 H47.5 M46.5 397.2 H47.5 M44 387.8 H49.5 M46.5 378.3 H47.5 M46.5 368.9 H47.5 M46.5 359.4 H47.5 M46.5 350.0 H47.5 M45.5 340.5 H48 M46.5 331.1 H47.5 M46.5 321.6 H47.5 M46.5 312.2 H47.5 M46.5 302.7 H47.5 M44 293.3 H49.5 M46.5 283.9 H47.5 M46.5 274.4 H47.5 M46.5 265.0 H47.5 M46.5 255.5 H47.5 M45.5 246.1 H48 M46.5 236.6 H47.5 M46.5 227.2 H47.5 M46.5 217.7 H47.5 M46.5 208.3 H47.5 M44 198.9 H49.5 M46.5 189.4 H47.5 M46.5 180.0 H47.5 M46.5 170.5 H47.5 M46.5 161.1 H47.5" stroke="#6a6a6a" stroke-width="1" fill="none"/>
<g font-family="Liberation Sans, sans-serif" font-size="9" fill="#8a8a8a" text-anchor="middle">
<text transform="translate(43.5 860.0) rotate(-90)">0</text>
<text transform="translate(43.5 765.5) rotate(-90)">50</text>
<text transform="translate(43.5 671.1) rotate(-90)">100</text>
<text transform="translate(43.5 576.6) rotate(-90)">150</text>
<text transform="translate(43.5 482.2) rotate(-90)">200</text>
<text transform="translate(43.5 387.8) rotate(-90)">250</text>
<text transform="translate(43.5 293.3) rotate(-90)">300</text>
<text transform="translate(43.5 198.9) rotate(-90)">350</text>
</g>
</svg></div>
<div class="abs" id="canvas" style="left:50px;top:157px;width:1817px;height:807px;background:#fff;overflow:hidden">
<svg width="1817" height="807" viewBox="50 157 1817 807" style="left:0;top:0">
<rect x="401" y="280" width="1137" height="585" fill="#c1c1c1"/>
<rect x="395.5" y="274.5" width="1136" height="586" fill="#fff" stroke="#9a9a9a" stroke-width="1"/>
<line x1="582.5" y1="157" x2="582.5" y2="964" stroke="#1c1c90" stroke-width="1" stroke-dasharray="4 2"/>
<line x1="602.5" y1="157" x2="602.5" y2="964" stroke="#1c1c90" stroke-width="1" stroke-dasharray="4 2"/>
<path d="M700.5 283.5 H739.5 V321 H851.5 V283.5 H890.5 V318 L888.9 327.3 L882.7 327.6 L879.4 345.4 L885.6 346.2 L875.9 400.8 L869.7 401.1 L866.2 419.9 L872.4 420.7 L860.3 489.4 L854.1 489.7 L850.6 508.2 L856.8 509.0 L847.1 564.2 L840.9 564.5 L837.5 582.5 L843.7 583.3 L831.4 653.0 L825.2 653.3 L821.9 670.6 L828.1 671.4 L818.3 727.1 L812.3 727.4 L808.9 745.5 H849.5 Q852.5 745.5 852.5 748.5 V786 Q852.5 794 844.5 794 H815 V788.5 H796 V794 H739.5 V788.5 H720 V794 H700.5 V775.0 H707 V755.6 H700.5 V698.8 H707 V680.8 H700.5 V594.6 H707 V576.6 H700.5 V519.0 H707 V501.0 H700.5 V415.4 H707 V397.3 H700.5 V339.4 H707 V321.9 H700.5 Z" fill="#9b954a" stroke="#191919" stroke-width="1.6" stroke-linejoin="miter"/>
<rect x="720.0" y="334.0" width="19.5" height="7.0" fill="#fff" stroke="#191919" stroke-width="1.4"/><rect x="795.5" y="334.0" width="20.0" height="7.0" fill="#fff" stroke="#191919" stroke-width="1.4"/><rect x="720.0" y="485.0" width="19.5" height="6.7" fill="#fff" stroke="#191919" stroke-width="1.4"/><rect x="795.5" y="485.0" width="20.0" height="6.7" fill="#fff" stroke="#191919" stroke-width="1.4"/><rect x="720.0" y="636.4" width="19.5" height="6.8" fill="#fff" stroke="#191919" stroke-width="1.4"/><rect x="795.5" y="636.4" width="20.0" height="6.8" fill="#fff" stroke="#191919" stroke-width="1.4"/>
<path d="M935.5 388.5 H1515 V408 H1508.5 V464 H1515 V483.7 H935.5 V464.5 H942.5 V408.2 H935.5 Z" fill="#727980" stroke="#191919" stroke-width="1.8"/>
<rect x="926.2" y="379.2" width="7.6" height="7.6" fill="#000"/>
<rect x="926.2" y="432.2" width="7.6" height="7.6" fill="#000"/>
<rect x="926.2" y="485.2" width="7.6" height="7.6" fill="#000"/>
<rect x="1221.2" y="379.2" width="7.6" height="7.6" fill="#000"/>
<path d="M1222.5 433.5 L1227.5 438.5 M1227.5 433.5 L1222.5 438.5" stroke="#4d535a" stroke-width="1" fill="none"/>
<rect x="1221.2" y="485.2" width="7.6" height="7.6" fill="#000"/>
<rect x="1516.2" y="379.2" width="7.6" height="7.6" fill="#000"/>
<rect x="1516.2" y="432.2" width="7.6" height="7.6" fill="#000"/>
<rect x="1516.2" y="485.2" width="7.6" height="7.6" fill="#000"/>
<g font-family="Liberation Sans, sans-serif" font-size="7.5" fill="#111">
<text x="67.5" y="887.2">Power</text>
<text x="77.1" y="899" text-anchor="middle">40</text>
<text x="103.5" y="899" text-anchor="middle">50</text>
<text x="129.8" y="899" text-anchor="middle">60</text>
<text x="156.7" y="899" text-anchor="middle">70</text>
<text x="183.3" y="899" text-anchor="middle" font-weight="bold">80</text>
<text x="212.9" y="899" text-anchor="middle">90</text>
<text x="51.5" y="917.5">20</text><text x="51.5" y="943.5">30</text>
<text x="260.2" y="885.6">Power:</text><text x="260.2" y="894.2">Speed:</text>
<text x="248" y="917.2">40</text><text x="248" y="943.5">50</text>
<text transform="translate(242.6 917.3) rotate(-90)">FREQ</text>
</g>
<rect x="68.8" y="907.2" width="17.6" height="17.2" fill="none" stroke="#e8525e" stroke-width="1.1"/>
<rect x="68.8" y="933.8" width="17.6" height="17.2" fill="none" stroke="#4040c8" stroke-width="1.1"/>
<rect x="68.8" y="960.4" width="17.6" height="17.2" fill="none" stroke="#d060d0" stroke-width="1.1"/>
<rect x="95.7" y="907.2" width="17.6" height="17.2" fill="none" stroke="#e64652" stroke-width="1.1"/>
<rect x="95.7" y="933.8" width="17.6" height="17.2" fill="none" stroke="#3434c0" stroke-width="1.1"/>
<rect x="95.7" y="960.4" width="17.6" height="17.2" fill="none" stroke="#cc50cc" stroke-width="1.1"/>
<rect x="122.6" y="907.2" width="17.6" height="17.2" fill="none" stroke="#e8525e" stroke-width="1.1"/>
<rect x="122.6" y="933.8" width="17.6" height="17.2" fill="none" stroke="#4848cc" stroke-width="1.1"/>
<rect x="122.6" y="960.4" width="17.6" height="17.2" fill="none" stroke="#d468d4" stroke-width="1.1"/>
<rect x="148.8" y="907.2" width="17.6" height="17.2" fill="none" stroke="#ea5a66" stroke-width="1.1"/>
<rect x="148.8" y="933.8" width="17.6" height="17.2" fill="none" stroke="#5050d0" stroke-width="1.1"/>
<rect x="148.8" y="960.4" width="17.6" height="17.2" fill="none" stroke="#d870d8" stroke-width="1.1"/>
<rect x="175.9" y="907.2" width="17.6" height="17.2" fill="none" stroke="#d41424" stroke-width="1.1"/>
<rect x="175.9" y="933.8" width="17.6" height="17.2" fill="none" stroke="#1c1cac" stroke-width="1.1"/>
<rect x="175.9" y="960.4" width="17.6" height="17.2" fill="none" stroke="#c030c0" stroke-width="1.1"/>
<rect x="205.7" y="908.0" width="17.6" height="17.2" fill="none" stroke="#f04858" stroke-width="1.1"/>
<rect x="205.7" y="934.6" width="17.6" height="17.2" fill="none" stroke="#5a5ad8" stroke-width="1.1"/>
<rect x="205.7" y="961.2" width="17.6" height="17.2" fill="none" stroke="#c020c0" stroke-width="1.1"/>
<rect x="265.5" y="906.2" width="17.6" height="17.2" fill="none" stroke="#e85c68" stroke-width="1.1"/>
<rect x="265.5" y="932.8" width="17.6" height="17.2" fill="none" stroke="#3c3cc4" stroke-width="1.1"/>
<rect x="265.5" y="959.4" width="17.6" height="17.2" fill="none" stroke="#d060d0" stroke-width="1.1"/>
</svg>
<div class="abs" style="left:1801px;top:151px;width:15px;height:420px;background:#cdcdcd"></div>
<div class="abs" style="left:1795px;top:0;width:22px;height:17px;background:#f4f4f4"></div>
<svg width="12" height="8" viewBox="0 0 12 8" style="left:1802px;top:5px"><path d="M1.5 6.5 L6 2 L10.5 6.5" fill="none" stroke="#333" stroke-width="1.8"/></svg>
<div class="abs" style="left:1795px;top:789px;width:22px;height:18px;background:#f4f4f4"></div>
<svg width="12" height="8" viewBox="0 0 12 8" style="left:1802px;top:794px"><path d="M1.5 1.5 L6 6 L10.5 1.5" fill="none" stroke="#333" stroke-width="1.8"/></svg>
</div>
<div class="abs" id="pagenav" style="left:33px;top:964px;width:1834px;height:18px;background:#f3f3f3">
<div class="abs" style="left:17px;top:0;width:910px;height:1px;background:#6e6e6e"></div>
<svg width="12" height="12" viewBox="0 0 12 12" style="left:19px;top:3px"><path d="M2.5 3.5 L5 1 H9.5 V11 H2.5 Z M2.5 3.8 H5.2 V1" fill="none" stroke="#666" stroke-width="1"/><path d="M6 4.5 V9 M3.8 6.8 H8.2" stroke="#666" stroke-width="1"/></svg>
<svg width="12" height="10" viewBox="0 0 12 10" style="left:35px;top:4px"><path d="M1 0 V10" stroke="#c4c4c4" stroke-width="1.4"/><path d="M10 0 V10 L3 5 Z" fill="#c4c4c4"/></svg>
<svg width="8" height="10" viewBox="0 0 8 10" style="left:53px;top:4px"><path d="M7.5 0 V10 L.5 5 Z" fill="#c4c4c4"/></svg>
<span class="t" style="left:69px;top:2.5px;color:#cacaca;letter-spacing:-0.337px;">1  of  1</span>
<svg width="8" height="10" viewBox="0 0 8 10" style="left:111px;top:4px"><path d="M.5 0 V10 L7.5 5 Z" fill="#c4c4c4"/></svg>
<svg width="12" height="10" viewBox="0 0 12 10" style="left:124px;top:4px"><path d="M11 0 V10" stroke="#c4c4c4" stroke-width="1.4"/><path d="M2 0 V10 L9 5 Z" fill="#c4c4c4"/></svg>
<svg width="12" height="12" viewBox="0 0 12 12" style="left:141px;top:3px"><path d="M2.5 3.5 L5 1 H9.5 V11 H2.5 Z M2.5 3.8 H5.2 V1" fill="none" stroke="#666" stroke-width="1"/><path d="M6 4.5 V9 M3.8 6.8 H8.2" stroke="#666" stroke-width="1"/></svg>
<svg width="66" height="18" viewBox="0 0 66 18" style="left:161px;top:0"><path d="M2 0 L7.5 17 H56.5 L62 0 Z" fill="#fff"/><path d="M2.5 0.5 L7.5 16.5 H56.5 L61.5 0.5" fill="none" stroke="#6e6e6e" stroke-width="1"/><path d="M3 0 H61" stroke="#fff" stroke-width="1.5"/></svg>
<span class="t" style="left:175px;top:2px;color:#111;letter-spacing:-0.505px;">Page 1</span>
<div class="abs" style="left:927px;top:0;width:1px;height:18px;background:#6e6e6e"></div>
<div class="abs" style="left:918px;top:2px;width:8px;height:15px;background:repeating-linear-gradient(0deg,#cfcfcf 0 1px,transparent 1px 2px),#ececec"></div>
<div class="abs" style="left:928px;top:1px;width:889px;height:17px;background:#fff"></div>
<div class="abs" style="left:928px;top:1px;width:16px;height:17px;background:#f2f2f2"></div>
<svg width="7" height="10" viewBox="0 0 7 10" style="left:931px;top:4px"><path d="M5.5 1 L1.5 5 L5.5 9" fill="none" stroke="#333" stroke-width="1.7"/></svg>
<div class="abs" style="left:1074px;top:2px;width:586px;height:14px;background:#cdcdcd"></div>
<div class="abs" style="left:1800px;top:1px;width:17px;height:17px;background:#f2f2f2"></div>
<svg width="7" height="10" viewBox="0 0 7 10" style="left:1805px;top:4px"><path d="M1.5 1 L5.5 5 L1.5 9" fill="none" stroke="#333" stroke-width="1.7"/></svg>
<div class="abs" style="left:1817px;top:0px;width:17px;height:18px;background:#fff"></div>
<svg width="13" height="13" viewBox="0 0 13 13" style="left:1819px;top:2px"><circle cx="5.5" cy="5.5" r="4" fill="#fff" stroke="#333" stroke-width="1"/><path d="M8.5 8.5 L12 12" stroke="#333" stroke-width="1.6"/><path d="M5.5 3.5 V7.5 M3.5 5.5 H7.5" stroke="#333" stroke-width=".9"/></svg>
</div>
<div class="abs" id="docpal" style="left:33px;top:982px;width:1834px;height:21px;background:#f3f3f3"><div class="abs" style="left:-1px;top:-4px;width:1835px;height:1px;background:#e2e2e2"></div><div class="abs" style="left:-1px;top:-1px;width:1835px;height:1px;background:#e6e6e6"></div>
<div class="abs" style="left:3px;top:3px;width:5px;height:15px;background:repeating-linear-gradient(0deg,#c8c8c8 0 1px,transparent 1px 3px)"></div>
<svg width="5" height="8" style="left:13px;top:6px"><path d="M0 0 V8 L4.5 4 Z" fill="#555"/></svg>
<svg width="14" height="14" viewBox="0 0 14 14" style="left:29px;top:3px"><path d="M1.5 12.5 L2.2 10 L7.5 4.7 L9.3 6.5 L4 11.8 Z" fill="#f6f6f6" stroke="#444" stroke-width="1"/><path d="M7 3.8 L10.2 7 M8 5 L10.5 2.5 Q12 1.3 12.7 2.5 Q13.2 3.6 12 4.6 L9.6 7" stroke="#222" stroke-width="2" fill="none"/></svg>
<svg width="6" height="9" viewBox="0 0 6 9" style="left:50px;top:5.5px"><path d="M5 .8 L1.2 4.5 L5 8.2" fill="none" stroke="#d0d0d0" stroke-width="1.5"/></svg>
<div class="abs" style="left:63px;top:1px;width:257px;height:18px;background:#4c4c4c"></div>
<div class="abs" style="left:64.0px;top:2px;width:16.6px;height:16px;background:#ffffff"></div>
<div class="abs" style="left:81.1px;top:2px;width:16.6px;height:16px;background:#8dc891"></div>
<div class="abs" style="left:98.1px;top:2px;width:16.6px;height:16px;background:#ff2d8c"></div>
<div class="abs" style="left:115.2px;top:2px;width:16.6px;height:16px;background:linear-gradient(90deg,#5a2fa0,#5a3ab8)"></div>
<div class="abs" style="left:132.3px;top:2px;width:16.6px;height:16px;background:linear-gradient(90deg,#5538e0,#5a45ff)"></div>
<div class="abs" style="left:149.3px;top:2px;width:16.6px;height:16px;background:#ba45f2"></div>
<div class="abs" style="left:166.4px;top:2px;width:16.6px;height:16px;background:#fb5a86"></div>
<div class="abs" style="left:183.5px;top:2px;width:16.6px;height:16px;background:#2a08d0"></div>
<div class="abs" style="left:200.6px;top:2px;width:16.6px;height:16px;background:#2406a6"></div>
<div class="abs" style="left:217.6px;top:2px;width:16.6px;height:16px;background:#99933c"></div>
<div class="abs" style="left:234.7px;top:2px;width:16.6px;height:16px;background:#079c48"></div>
<div class="abs" style="left:251.8px;top:2px;width:16.6px;height:16px;background:#ff08f8"></div>
<div class="abs" style="left:268.8px;top:2px;width:16.6px;height:16px;background:#86fdfd"></div>
<div class="abs" style="left:285.9px;top:2px;width:16.6px;height:16px;background:#666666"></div>
<div class="abs" style="left:303.0px;top:2px;width:16.2px;height:16px;background:#fffdb8"></div>
<svg width="17" height="16" style="left:64px;top:2px"><path d="M2 14.5 L15 1.5" stroke="#d8263c" stroke-width="1"/></svg>
<svg width="7" height="10" viewBox="0 0 7 10" style="left:1797px;top:6px"><path d="M1.5 1 L5.5 5 L1.5 9" fill="none" stroke="#d4d4d4" stroke-width="1.5"/></svg>
<svg width="8" height="8" viewBox="0 0 8 8" style="left:1815px;top:7px"><path d="M1 1 L4 4 L1 7 M4.5 1 L7.5 4 L4.5 7" fill="none" stroke="#d4d4d4" stroke-width="1.1"/></svg>
</div>
<div class="abs" id="status" style="left:0;top:1002px;width:1920px;height:38px;background:#f3f3f3;border-top:1px solid #dadada">
<svg width="18" height="18" viewBox="0 0 18 18" style="left:9.0px;top:10.0px"><g transform="translate(8.5 8.5)"><circle r="4.6" fill="none" stroke="#2a2a2a" stroke-width="2.3"/><rect x="-1.4" y="-7.8" width="2.8" height="3.2" fill="#2a2a2a" transform="rotate(0)"/><rect x="-1.4" y="-7.8" width="2.8" height="3.2" fill="#2a2a2a" transform="rotate(45)"/><rect x="-1.4" y="-7.8" width="2.8" height="3.2" fill="#2a2a2a" transform="rotate(90)"/><rect x="-1.4" y="-7.8" width="2.8" height="3.2" fill="#2a2a2a" transform="rotate(135)"/><rect x="-1.4" y="-7.8" width="2.8" height="3.2" fill="#2a2a2a" transform="rotate(180)"/><rect x="-1.4" y="-7.8" width="2.8" height="3.2" fill="#2a2a2a" transform="rotate(225)"/><rect x="-1.4" y="-7.8" width="2.8" height="3.2" fill="#2a2a2a" transform="rotate(270)"/><rect x="-1.4" y="-7.8" width="2.8" height="3.2" fill="#2a2a2a" transform="rotate(315)"/></g><path d="M18 14.5 V18 H14.5 Z" fill="#555"/></svg>
<span class="t" style="left:37px;top:12px;color:#111;letter-spacing:0.045px;">Click an object twice for rotating/skewing; dbl-clicking tool selects all objects; Shift+click multi-selects; Alt+click digs; Ctrl+click selects in a group</span>
<span class="t" style="left:835px;top:12px;color:#111;letter-spacing:-0.164px;">Group of 1 Objects on Layer 1</span>
<svg width="18" height="18" viewBox="0 0 18 18" style="left:1431px;top:10px"><path d="M8 2 L14 8 L8 14 L2 8 Z" fill="#f8f8f8" stroke="#222" stroke-width="1.2"/><path d="M3.6 9 H12.4 L8 13.2 Z" fill="#c8202c"/><path d="M11.5 11 V16.5 H17 Z" fill="#c8202c"/><path d="M8 2 L11 5 L5 11 L2 8Z" fill="none" stroke="#222" stroke-width="1.2"/></svg>
<div class="abs" style="left:1451px;top:7px;width:22px;height:22px;background:#727980;border:1px solid #9a9a9a"></div>
<span class="t" style="left:1477px;top:12px;color:#111;letter-spacing:-0.551px;">R:114 G:121 B:128 (#727980)</span>
<svg width="10" height="18" viewBox="0 0 10 18" style="left:1637px;top:9px"><path d="M5 1 L2 7.5 Q1.6 9.5 3.4 10.8 V12.5 H6.6 V10.8 Q8.4 9.5 8 7.5 Z" fill="#f6f6f6" stroke="#222" stroke-width="1"/><path d="M5 1.5 V7.5" stroke="#222" stroke-width="1"/><rect x="3.3" y="12.8" width="3.4" height="3.6" fill="#f6f6f6" stroke="#222" stroke-width="1"/></svg>
<div class="abs" style="left:1650px;top:7px;width:22px;height:22px;background:#191919;border:1px solid #555"></div>
<span class="t" style="left:1676px;top:12px;color:#111;letter-spacing:-0.573px;">R:25 G:25 B:25 (#191919)</span>
<div class="vsep" style="left:1882px;top:6px;height:26px;background:#dddddd"></div>
<svg width="18" height="16" viewBox="0 0 18 16" style="left:1893px;top:11px"><rect x="1" y="1" width="16" height="11" fill="#c8202c" stroke="#222" stroke-width="1.2"/><rect x="1.6" y="7" width="14.8" height="4.4" fill="#3a9ad8"/><circle cx="9" cy="6.5" r="2.2" fill="#fff" stroke="#c8202c" stroke-width=".8"/><path d="M3 15 H15" stroke="#222" stroke-width="1.4"/></svg>
</div>
<div class="abs" id="palette" style="left:1867px;top:117px;width:22px;height:885px;background:#f3f3f3;border-left:1px solid #e2e2e2;border-right:1px solid #dcdcdc">
<div class="abs" style="left:4px;top:3px;width:13px;height:5px;background:repeating-linear-gradient(90deg,#d8d8d8 0 1px,transparent 1px 2px);opacity:.7"></div>
<svg width="5" height="8" style="left:8px;top:13px"><path d="M0 0 V8 L4.5 4 Z" fill="#777"/></svg>
<svg width="14" height="14" viewBox="0 0 14 14" style="left:3px;top:31px"><path d="M1.5 12.5 L2.2 10 L7.5 4.7 L9.3 6.5 L4 11.8 Z" fill="#ddd" stroke="#cfcfcf" stroke-width="1"/><path d="M7 3.8 L10.2 7 M8 5 L10.5 2.5 Q12 1.3 12.7 2.5 Q13.2 3.6 12 4.6 L9.6 7" stroke="#c8c8c8" stroke-width="2" fill="none"/></svg>
<svg width="10" height="7" viewBox="0 0 10 7" style="left:5px;top:52px"><path d="M1 6 L5 2 L9 6" fill="none" stroke="#d2d2d2" stroke-width="1.5"/></svg>
<div class="abs" style="left:2px;top:64px;width:18px;height:780px;background:#3c3c3c"></div>
<div class="abs" style="left:3px;top:65px;width:16px;height:16.5px;background:#fff"></div>
<svg width="16" height="16" style="left:3px;top:65px"><path d="M1.5 14.5 L14.5 1.5" stroke="#d8263c" stroke-width="1"/></svg>
<div class="abs" style="left:3px;top:82px;width:16px;height:16.2px;background:#000000"></div>
<div class="abs" style="left:3px;top:99px;width:16px;height:16.2px;background:#1a1a1a"></div>
<div class="abs" style="left:3px;top:116px;width:16px;height:16.2px;background:#333333"></div>
<div class="abs" style="left:3px;top:133px;width:16px;height:16.2px;background:#4d4d4d"></div>
<div class="abs" style="left:3px;top:150px;width:16px;height:16.2px;background:#666666"></div>
<div class="abs" style="left:3px;top:167px;width:16px;height:16.2px;background:#808080"></div>
<div class="abs" style="left:3px;top:184px;width:16px;height:16.2px;background:#999999"></div>
<div class="abs" style="left:3px;top:201px;width:16px;height:16.2px;background:#b3b3b3"></div>
<div class="abs" style="left:3px;top:218px;width:16px;height:16.2px;background:#cccccc"></div>
<div class="abs" style="left:3px;top:235px;width:16px;height:16.2px;background:#e6e6e6"></div>
<div class="abs" style="left:3px;top:252px;width:16px;height:16.2px;background:#ffffff"></div>
<div class="abs" style="left:3px;top:269px;width:16px;height:16.2px;background:#0000ff"></div>
<div class="abs" style="left:3px;top:286px;width:16px;height:16.2px;background:#00ffff"></div>
<div class="abs" style="left:3px;top:303px;width:16px;height:16.2px;background:#00ff00"></div>
<div class="abs" style="left:3px;top:320px;width:16px;height:16.2px;background:#ffff00"></div>
<div class="abs" style="left:3px;top:337px;width:16px;height:16.2px;background:#ff0000"></div>
<div class="abs" style="left:3px;top:354px;width:16px;height:16.2px;background:#ff00ff"></div>
<div class="abs" style="left:3px;top:371px;width:16px;height:16.2px;background:#9900cc"></div>
<div class="abs" style="left:3px;top:388px;width:16px;height:16.2px;background:#ff6600"></div>
<div class="abs" style="left:3px;top:405px;width:16px;height:16.2px;background:#ff99cc"></div>
<div class="abs" style="left:3px;top:422px;width:16px;height:16.2px;background:#663333"></div>
<div class="abs" style="left:3px;top:439px;width:16px;height:16.2px;background:#ccccff"></div>
<div class="abs" style="left:3px;top:456px;width:16px;height:16.2px;background:#9999ff"></div>
<div class="abs" style="left:3px;top:473px;width:16px;height:16.2px;background:#6699ff"></div>
<div class="abs" style="left:3px;top:490px;width:16px;height:16.2px;background:#6666ff"></div>
<div class="abs" style="left:3px;top:507px;width:16px;height:16.2px;background:#6666cc"></div>
<div class="abs" style="left:3px;top:524px;width:16px;height:16.2px;background:#003399"></div>
<div class="abs" style="left:3px;top:541px;width:16px;height:16.2px;background:#000066"></div>
<div class="abs" style="left:3px;top:558px;width:16px;height:16.2px;background:#336699"></div>
<div class="abs" style="left:3px;top:575px;width:16px;height:16.2px;background:#00ccff"></div>
<div class="abs" style="left:3px;top:592px;width:16px;height:16.2px;background:#99ffff"></div>
<div class="abs" style="left:3px;top:609px;width:16px;height:16.2px;background:#99cccc"></div>
<div class="abs" style="left:3px;top:626px;width:16px;height:16.2px;background:#669999"></div>
<div class="abs" style="left:3px;top:643px;width:16px;height:16.2px;background:#336666"></div>
<div class="abs" style="left:3px;top:660px;width:16px;height:16.2px;background:#003333"></div>
<div class="abs" style="left:3px;top:677px;width:16px;height:16.2px;background:#006633"></div>
<div class="abs" style="left:3px;top:694px;width:16px;height:16.2px;background:#009933"></div>
<div class="abs" style="left:3px;top:711px;width:16px;height:16.2px;background:#339966"></div>
<div class="abs" style="left:3px;top:728px;width:16px;height:16.2px;background:#33cc66"></div>
<div class="abs" style="left:3px;top:745px;width:16px;height:16.2px;background:#33cc33"></div>
<div class="abs" style="left:3px;top:762px;width:16px;height:16.2px;background:#66ffcc"></div>
<div class="abs" style="left:3px;top:779px;width:16px;height:16.2px;background:#33cc99"></div>
<div class="abs" style="left:3px;top:796px;width:16px;height:16.2px;background:#99cc99"></div>
<div class="abs" style="left:3px;top:813px;width:16px;height:16.2px;background:#ccffcc"></div>
<div class="abs" style="left:3px;top:830px;width:16px;height:13.5px;background:#99ff99"></div>
<div class="abs" style="left:3px;top:745px;width:16px;height:16.2px;border:1px solid #2a5a2a"></div>
<svg width="10" height="7" viewBox="0 0 10 7" style="left:5px;top:849px"><path d="M1 1 L5 5 L9 1" fill="none" stroke="#c8c8c8" stroke-width="1.5"/></svg>
<svg width="9" height="8" viewBox="0 0 9 8" style="left:6px;top:865px"><path d="M1 1 L4 4 L1 7 M5 1 L8 4 L5 7" fill="none" stroke="#cfcfcf" stroke-width="1.1"/></svg>
</div>
<div class="abs" id="dock" style="left:1889px;top:117px;width:31px;height:885px;background:#f3f3f3">
<svg width="18" height="18" viewBox="0 0 18 18" style="left:6.0px;top:8.0px"><path d="M3 3 H15 V15 H3 Z" fill="none" stroke="#111" stroke-width="1.2"/><rect x="1.4" y="1.4" width="3.2" height="3.2" fill="#fff" stroke="#111" stroke-width="1"/><rect x="7.4" y="1.4" width="3.2" height="3.2" fill="#fff" stroke="#111" stroke-width="1"/><rect x="13.4" y="1.4" width="3.2" height="3.2" fill="#fff" stroke="#111" stroke-width="1"/><rect x="1.4" y="7.4" width="3.2" height="3.2" fill="#fff" stroke="#111" stroke-width="1"/><rect x="13.4" y="7.4" width="3.2" height="3.2" fill="#fff" stroke="#111" stroke-width="1"/><rect x="1.4" y="13.4" width="3.2" height="3.2" fill="#fff" stroke="#111" stroke-width="1"/><rect x="7.4" y="13.4" width="3.2" height="3.2" fill="#fff" stroke="#111" stroke-width="1"/><rect x="13.4" y="13.4" width="3.2" height="3.2" fill="#fff" stroke="#111" stroke-width="1"/><rect x="7" y="7" width="4" height="4" fill="#111"/></svg><svg width="4" height="4" style="left:22px;top:24px"><path d="M4 0 V4 H0 Z" fill="#666"/></svg>
<span class="t" style="left:6.5px;top:37px;font-size:14px;letter-spacing:-1.4px;color:#111">XY</span><svg width="4" height="4" style="left:22px;top:54px"><path d="M4 0 V4 H0 Z" fill="#666"/></svg>
<div class="hsep" style="left:3px;top:64px;width:24px;background:#dedede"></div>
<svg width="18" height="18" viewBox="0 0 18 18" style="left:6.0px;top:74.0px"><path d="M3 1 V10 M1.5 3 L3 1 L4.5 3 M1.5 8.5 L3 10 L4.5 8.5" fill="none" stroke="#1e1e1e" stroke-width="1.1"/><path d="M6 15 H17 M8 13.5 L6 15 L8 16.5 M15 13.5 L17 15 L15 16.5" fill="none" stroke="#1e1e1e" stroke-width="1.1"/><path d="M3 12 V15 H5" fill="none" stroke="#1e1e1e" stroke-width="1" stroke-dasharray="1 1"/></svg><svg width="4" height="4" style="left:22px;top:90px"><path d="M4 0 V4 H0 Z" fill="#666"/></svg>
<svg width="18" height="18" viewBox="0 0 18 18" style="left:6.0px;top:103.0px"><path d="M3 1 V10 M1.5 3 L3 1 L4.5 3 M1.5 8.5 L3 10 L4.5 8.5" fill="none" stroke="#1e1e1e" stroke-width="1.1"/><path d="M6 15 H17 M8 13.5 L6 15 L8 16.5 M15 13.5 L17 15 L15 16.5" fill="none" stroke="#1e1e1e" stroke-width="1.1"/><text x="6.5" y="9.5" font-size="10.5" font-family="Liberation Sans, sans-serif" fill="#1e1e1e">%</text></svg><svg width="4" height="4" style="left:22px;top:119px"><path d="M4 0 V4 H0 Z" fill="#666"/></svg>
<div class="abs" style="left:6px;top:130px;width:18px;height:18px;background:#fff;border:1px solid #b5b5b5"></div>
<svg width="14" height="14" viewBox="0 0 12 12" style="left:8.0px;top:132.0px"><path d="M4.2 7 V2.6 H7.8 V7" fill="none" stroke="#111" stroke-width="1.3"/><rect x="1.6" y="6.6" width="8.8" height="4.6" fill="#111"/><path d="M5.4 6.8 h1.2" stroke="#fff" stroke-width="1.6"/></svg>
<div class="hsep" style="left:3px;top:155px;width:24px;background:#dedede"></div>
<svg width="18" height="18" viewBox="0 0 18 18" style="left:6.0px;top:165.0px"><path d="M1.5 15.5 H11 L6 7.5 Z" fill="none" stroke="#1e1e1e" stroke-width="1.2"/><path d="M10.5 5.5 A3.2 3.2 0 1 1 14 8.6" fill="none" stroke="#1e1e1e" stroke-width="1.1"/><path d="M15.2 7 L13.2 8.8 L15.6 10" fill="none" stroke="#1e1e1e" stroke-width="1"/></svg><svg width="4" height="4" style="left:22px;top:181px"><path d="M4 0 V4 H0 Z" fill="#666"/></svg>
<svg width="18" height="18" viewBox="0 0 18 18" style="left:6.0px;top:201.0px"><circle cx="7" cy="7" r="5.3" fill="none" stroke="#1e1e1e" stroke-width="1.1"/><path d="M7 4.3 V9.7 M4.3 7 H9.7" stroke="#1e1e1e" stroke-width="1.1"/><text x="9.5" y="17" font-size="6.5" font-family="Liberation Sans, sans-serif" fill="#1e1e1e">30°</text></svg><svg width="4" height="4" style="left:22px;top:217px"><path d="M4 0 V4 H0 Z" fill="#666"/></svg>
<div class="hsep" style="left:3px;top:192px;width:24px;background:#dedede"></div>
<div class="hsep" style="left:3px;top:228px;width:24px;background:#dedede"></div>
<svg width="18" height="18" viewBox="0 0 18 18" style="left:6.0px;top:238.0px"><path d="M2 7 H15 L10.5 2.5 M16 11 H3 L7.5 15.5" fill="none" stroke="#1e1e1e" stroke-width="1.3"/></svg><svg width="4" height="4" style="left:22px;top:254px"><path d="M4 0 V4 H0 Z" fill="#666"/></svg>
<div class="hsep" style="left:3px;top:265px;width:24px;background:#dedede"></div>
<svg width="18" height="18" viewBox="0 0 18 18" style="left:6.0px;top:302.0px"><path d="M2.5 4 H5.5 V8.5 H7 V13 H2.5 Z" fill="#f6f6f6" stroke="#222" stroke-width="1.2"/><path d="M15.5 4 H12.5 V8.5 H11 V13 H15.5 Z" fill="#1f6fbf" stroke="#1a5a9c" stroke-width="1"/><path d="M9 1 V17" stroke="#222" stroke-width="1" stroke-dasharray="2 1.4"/></svg>
<svg width="18" height="18" viewBox="0 0 18 18" style="left:6.0px;top:332.0px"><path d="M5 2.5 V5.5 H9.5 V7 H14 V2.5 Z" fill="#f6f6f6" stroke="#222" stroke-width="1.2"/><path d="M5 15.5 V12.5 H9.5 V11 H14 V15.5 Z" fill="#1f6fbf" stroke="#1a5a9c" stroke-width="1"/><path d="M1 9 H17" stroke="#222" stroke-width="1" stroke-dasharray="2 1.4"/></svg>
<div class="hsep" style="left:3px;top:388px;width:24px;background:#dedede"></div>
<svg width="18" height="18" viewBox="0 0 18 18" style="left:6.0px;top:398.0px"><path d="M4 2 L6 4 L4 6 L2 4 Z M12 9 L14.5 11.5 L12 14 L9.5 11.5 Z" fill="#f6f6f6" stroke="#1e1e1e" stroke-width="1"/><path d="M12 6 V8 M12 15 V17 M7 11.5 H8.5 M15.5 11.5 H17 M15 1.5 V4" stroke="#1e1e1e" stroke-width="1" stroke-dasharray="1 1"/></svg>
<div class="hsep" style="left:3px;top:425px;width:24px;background:#dedede"></div>
<svg width="18" height="18" viewBox="0 0 18 18" style="left:6.0px;top:432.0px"><rect x="7.5" y="1.5" width="8" height="8" fill="#f8f8f8" stroke="#1e1e1e" stroke-width="1.1"/><path d="M11.5 3.2 V7.8 M9.2 5.5 H13.8" stroke="#1e1e1e" stroke-width="1.1"/><path d="M1 5.5 H6.5 M11.5 11 V17" stroke="#1e1e1e" stroke-width="1" stroke-dasharray="1 1.2"/></svg>
</div>
</body>
</html>
